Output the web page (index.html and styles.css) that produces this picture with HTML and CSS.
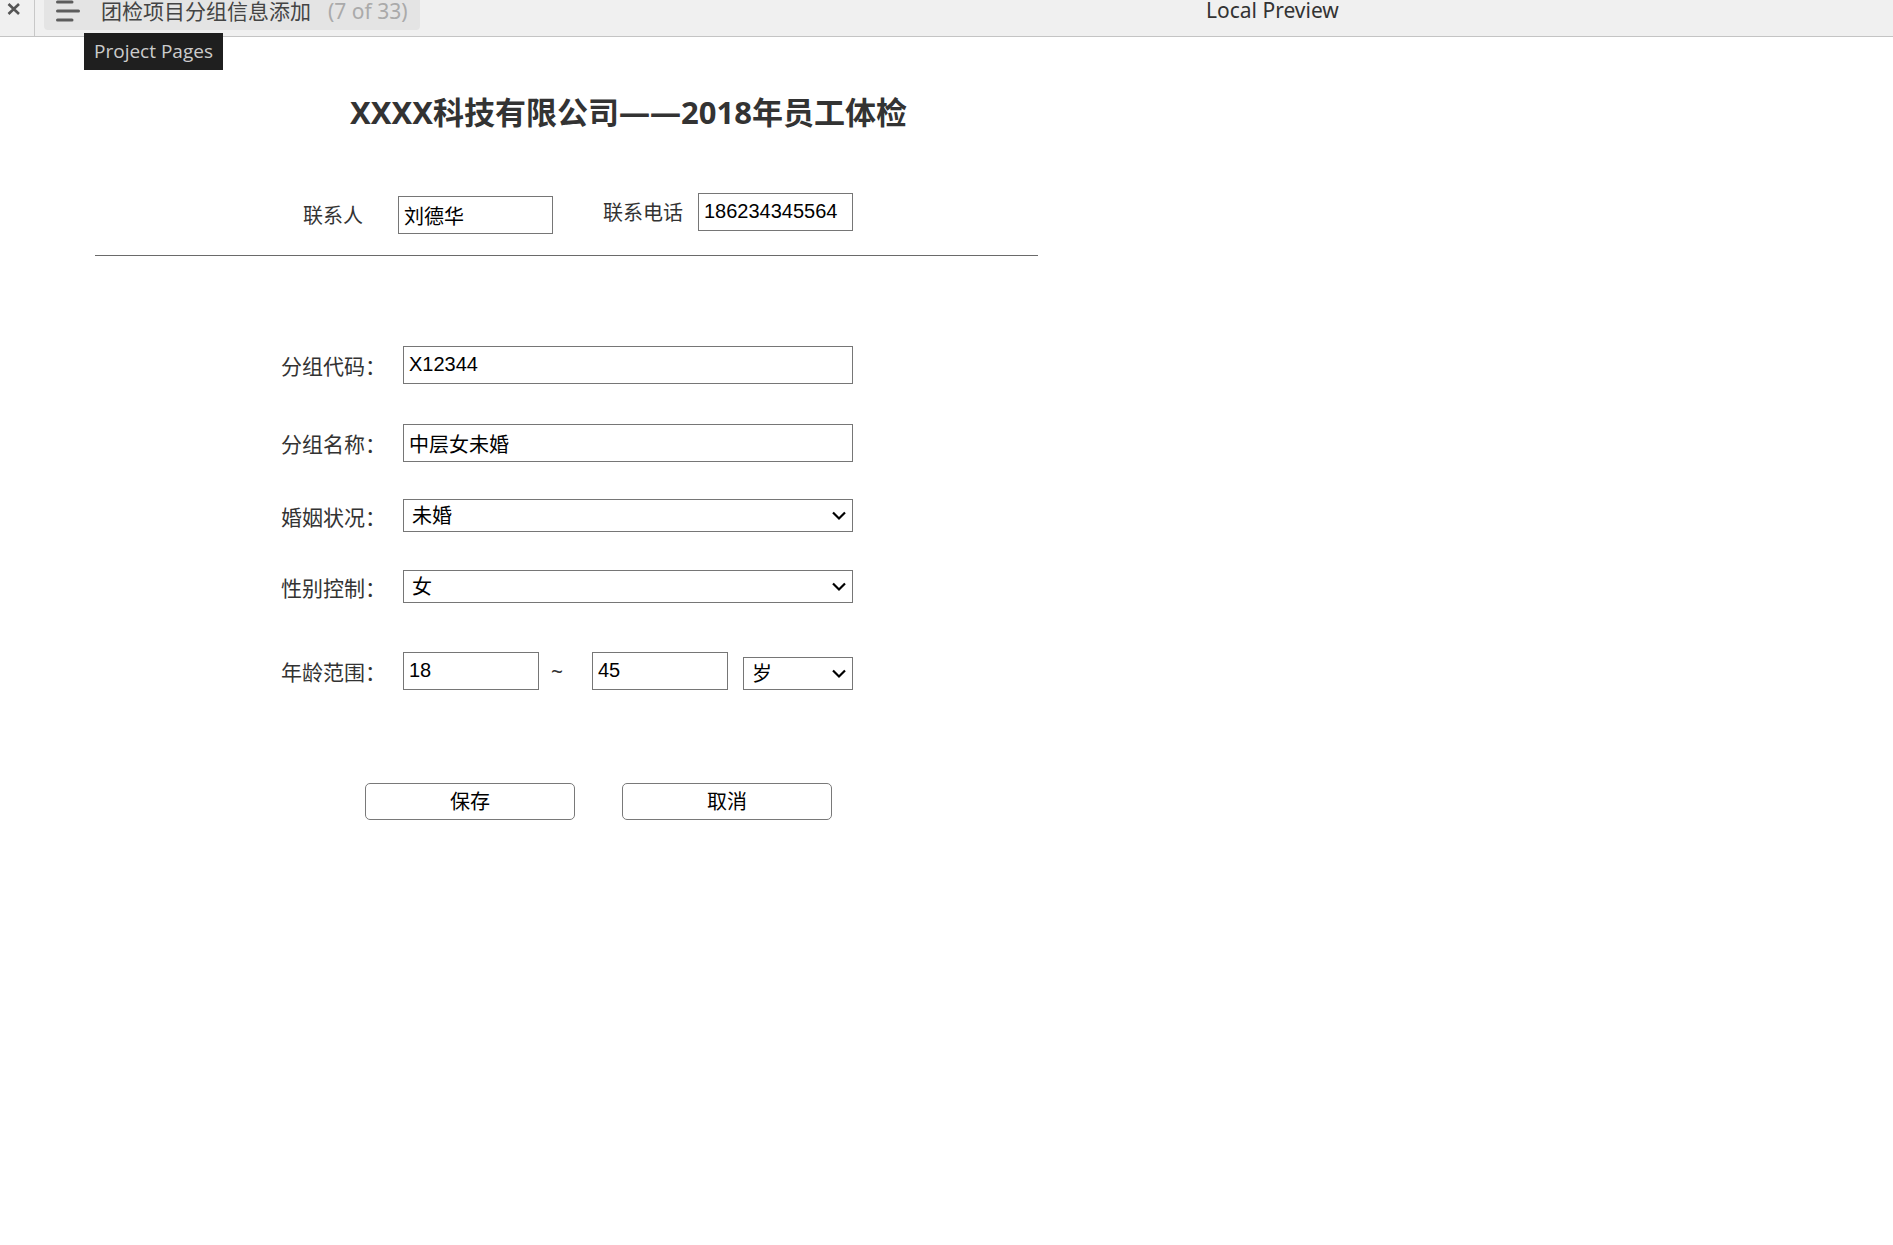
FILE: index.html
```html
<!DOCTYPE html>
<html lang="zh-CN">
<head>
<meta charset="utf-8">
<meta name="viewport" content="width=device-width, initial-scale=1">
<title>团检项目分组信息添加</title>
<link rel="stylesheet" href="styles.css">
</head>
<body>
<header class="topbar">
  <button class="close" type="button" aria-label="Close">
    <svg width="14" height="12" viewBox="0 0 14 12"><path d="M1.500 1L12 11M12 1L1.500 11" stroke="#555" stroke-width="2.6" fill="none"/></svg>
  </button>
  <div class="pages">
    <button class="pages-button" type="button">
      <svg width="25" height="22" viewBox="0 0 25 22"><path d="M2.500 2H17M2.500 11H23.500M2.500 20H17" stroke="#5c5c5c" stroke-width="3" stroke-linecap="round" fill="none"/></svg>
      <span class="page-name">团检项目分组信息添加</span>
      <span class="page-count">(7 of 33)</span>
    </button>
    <div class="tooltip" role="tooltip">Project Pages</div>
  </div>
  <div class="preview-title">Local Preview</div>
</header>
<main class="sheet">
  <h1 class="title">XXXX科技有限公司——2018年员工体检</h1>
  <form class="form">
    <div class="contacts">
      <div class="contact">
        <label for="person">联系人</label>
        <input class="field" id="person" type="text" value="刘德华">
      </div>
      <div class="contact contact-phone">
        <label for="phone">联系电话</label>
        <input class="field number" id="phone" type="text" value="186234345564">
      </div>
    </div>
    <div class="rows">
      <div class="row">
        <label for="code">分组代码：</label>
        <input class="field number" id="code" type="text" value="X12344">
      </div>
      <div class="row">
        <label for="name">分组名称：</label>
        <input class="field" id="name" type="text" value="中层女未婚">
      </div>
      <div class="row row-select">
        <label for="marriage">婚姻状况：</label>
        <select class="select" id="marriage"><option>未婚</option><option>已婚</option></select>
      </div>
      <div class="row row-select">
        <label for="gender">性别控制：</label>
        <select class="select" id="gender"><option>女</option><option>男</option></select>
      </div>
      <div class="row row-age">
        <label for="age-from">年龄范围：</label>
        <div class="range">
          <input class="field number" id="age-from" type="text" value="18">
          <span class="tilde">~</span>
          <input class="field number" type="text" value="45" aria-label="年龄上限">
          <select class="select unit" aria-label="年龄单位"><option>岁</option><option>月</option></select>
        </div>
      </div>
    </div>
    <div class="actions">
      <button class="action" type="button">保存</button>
      <button class="action" type="button">取消</button>
    </div>
  </form>
</main>
</body>
</html>
```

FILE: styles.css
```css
* {
  box-sizing: border-box;
}

body {
  margin: 0;
  background: #fff;
  color: #333;
  font: 20px/28px "Noto Sans", "Noto Sans CJK SC", sans-serif;
}

button {
  padding: 0;
  border: 0;
  background: none;
  color: inherit;
  font: inherit;
}

/* Top bar */
.topbar {
  display: flex;
  align-items: flex-start;
  height: 37px;
  background: #f0f0f0;
  border-bottom: 1px solid #c4c4c4;
}

.close {
  display: flex;
  justify-content: flex-end;
  width: 35px;
  height: 36px;
  padding: 3px 13px 0 0;
  border-right: 1px solid #c8c8c8;
}

.pages {
  position: relative;
  margin-left: 9px;
}

.pages-button {
  display: flex;
  align-items: center;
  width: 376px;
  height: 30px;
  padding: 0 0 8px 11px;
  border-radius: 0 0 4px 4px;
  background: #e4e4e4;
  white-space: nowrap;
}

.page-name {
  margin-left: 21px;
  color: #444;
  font-size: 21px;
}

.page-count {
  margin-left: 17px;
  color: #aaa;
  font-size: 21px;
}

.tooltip {
  position: absolute;
  top: 33px;
  left: 40px;
  width: 139px;
  height: 37px;
  background: #1f1f1f;
  color: #ccc;
  font: 19px/36px "Open Sans", sans-serif;
  text-align: center;
  white-space: nowrap;
}

.preview-title {
  margin-left: 786px;
  color: #333;
  font-size: 21px;
  line-height: 20px;
  white-space: nowrap;
}

/* Sheet */
.sheet {
  max-width: 1038px;
  padding-left: 95px;
}

.title {
  margin: 0;
  padding: 55px 0 0 124px;
  font-size: 31px;
  line-height: 40px;
  text-align: center;
}

.contacts {
  display: flex;
  align-items: flex-start;
  height: 124px;
  padding: 61px 0 0 208px;
  border-bottom: 1px solid #6a6a6a;
}

.contact {
  display: grid;
  grid-template-columns: 95px 155px;
  align-items: center;
  padding-top: 3px;
}

.contact-phone {
  margin-left: 50px;
  padding-top: 0;
}

label {
  padding-top: 2px;
}

.field {
  width: 100%;
  height: 38px;
  padding: 0 5px;
  border: 1px solid #767676;
  border-radius: 0;
  background: #fff;
  color: #000;
  font: 20px "Liberation Sans", "Noto Sans CJK SC", sans-serif;
}

.number {
  padding-bottom: 2px;
}

.select {
  width: 100%;
  height: 33px;
  padding: 0 8px;
  border: 1px solid #767676;
  border-radius: 0;
  appearance: none;
  background: #fff url("data:image/svg+xml,%3Csvg xmlns='http://www.w3.org/2000/svg' width='14' height='10' viewBox='0 0 14 10'%3E%3Cpath d='M1 1.500L7 7.500L13 1.500' fill='none' stroke='%23000' stroke-width='2.2'/%3E%3C/svg%3E") no-repeat right 6px center;
  color: #000;
  font: 20px "Liberation Sans", "Noto Sans CJK SC", sans-serif;
}

.rows {
  padding: 90px 0 0 186px;
}

.row {
  display: grid;
  grid-template-columns: 122px minmax(0, 450px);
  align-items: center;
  margin-bottom: 40px;
  font-size: 21px;
}

.row-select {
  margin: -3px 0 41px;
}

.row-age {
  margin: 49px 0 0;
}

.range {
  display: grid;
  grid-template-columns: 136px 53px 136px 15px 110px;
  align-items: end;
}

.tilde {
  padding-left: 12px;
  line-height: 38px;
}

.unit {
  grid-column: 5;
}

.actions {
  display: flex;
  gap: 47px;
  padding: 93px 0 0 270px;
}

.action {
  width: 210px;
  height: 37px;
  border: 1px solid #797979;
  border-radius: 5px;
  background: #fff;
  color: #000;
}
```
